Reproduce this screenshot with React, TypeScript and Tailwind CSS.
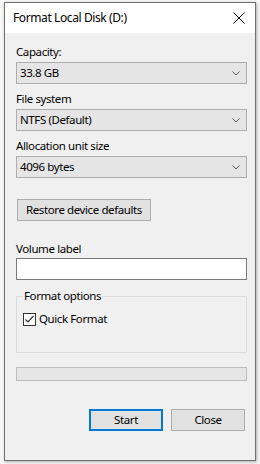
import React from "react";

function Combo({ value }: { value: string }) {
  return (
    <div className="flex h-[22px] w-[231px] items-center justify-between border border-[#adadad] bg-[#e5e5e5] pl-[3px] pr-[5px] text-[11.5px] text-black">
      <span className="whitespace-nowrap">{value}</span>
      <svg width="8" height="5" viewBox="0 0 8 5" className="mr-[1px]">
        <path d="M0.5 0.5 L4 4 L7.5 0.5" fill="none" stroke="#5a5a5a" strokeWidth="1" />
      </svg>
    </div>
  );
}

function Label({ text, h = "h-[18px]" }: { text: string; h?: string }) {
  return <div className={`${h} whitespace-nowrap leading-[16px] text-[11.5px] text-black`}>{text}</div>;
}

export default function App() {
  return (
    <div
      className="h-[464px] w-[260px] overflow-hidden bg-[#f7f7f7] pl-[4px] pt-[2px] tracking-[-0.4px]"
      style={{ fontFamily: '"Noto Sans", "Liberation Sans", sans-serif' }}
    >
      <div className="flex h-[459px] w-[252px] flex-col border border-[#6f6f6f] bg-[#f0f0f0] shadow-[1px_1px_3px_rgba(0,0,0,0.3)]">
        <div className="flex h-[30px] shrink-0 items-center justify-between bg-white pl-[8px] pr-[8px]">
          <span className="whitespace-nowrap text-[12px] text-black">Format Local Disk (D:)</span>
          <svg width="12" height="12" viewBox="0 0 12 12" className="mr-[2px]">
            <path d="M0.5 0.5 L11.5 11.5 M11.5 0.5 L0.5 11.5" stroke="#000" strokeWidth="1" fill="none" />
          </svg>
        </div>
        <div className="flex flex-col pl-[11px] pr-[8px] pt-[11px]">
          <Label text="Capacity:" />
          <Combo value="33.8 GB" />
          <div className="h-[7px] shrink-0" />
          <Label text="File system" />
          <Combo value="NTFS (Default)" />
          <div className="h-[7px] shrink-0" />
          <Label text="Allocation unit size" />
          <Combo value="4096 bytes" />
          <div className="h-[21px] shrink-0" />
          <div className="ml-[1px] flex h-[22px] w-[134px] items-center whitespace-nowrap border border-[#adadad] bg-[#e1e1e1] pl-[8px] text-[11.5px] text-black">
            Restore device defaults
          </div>
          <div className="h-[20px] shrink-0" />
          <Label text="Volume label" h="h-[17px]" />
          <div className="h-[22px] w-[231px] shrink-0 border border-[#7a7a7a] bg-white" />
          <div className="h-[16px] shrink-0" />
          <div className="relative h-[57px] w-[231px] shrink-0 border border-[#dcdcdc]">
            <span className="absolute left-[6px] top-[-9px] whitespace-nowrap bg-[#f0f0f0] px-[1px] text-[11.5px] leading-[16px] text-black">
              Format options
            </span>
            <div className="mt-[14px] flex items-center pl-[6px]">
              <div className="flex h-[13px] w-[13px] items-center justify-center border border-[#333] bg-white">
                <svg width="11" height="11" viewBox="0 0 11 11">
                  <path d="M1.5 5.5 L4 8 L9.5 2" fill="none" stroke="#333" strokeWidth="1.2" />
                </svg>
              </div>
              <span className="ml-[3px] whitespace-nowrap text-[11.5px] leading-[16px] text-black">Quick Format</span>
            </div>
          </div>
          <div className="h-[14px] shrink-0" />
          <div className="h-[14px] w-[231px] shrink-0 border border-[#bcbcbc] bg-[#e6e6e6]" />
          <div className="h-[28px] shrink-0" />
          <div className="flex justify-end gap-[8px] pr-[2px]">
            <div className="flex h-[22px] w-[74px] items-center justify-center border-2 border-[#0078d7] bg-[#e1e1e1] text-[11.5px] text-black">
              Start
            </div>
            <div className="flex h-[22px] w-[74px] items-center justify-center border border-[#adadad] bg-[#e1e1e1] text-[11.5px] text-black">
              Close
            </div>
          </div>
        </div>
      </div>
    </div>
  );
}
